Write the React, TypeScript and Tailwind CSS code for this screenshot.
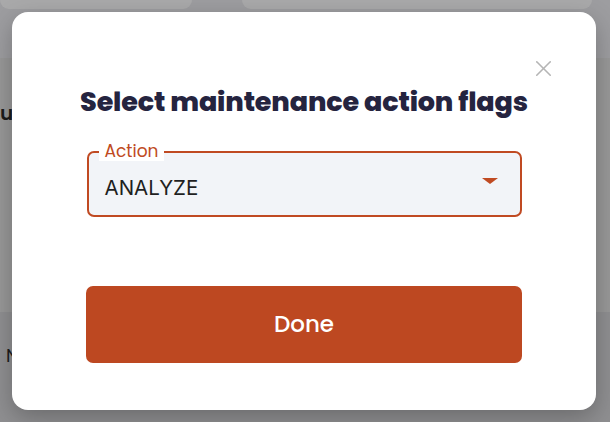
import { X } from 'lucide-react';

const font = { fontFamily: 'Poppins, "Inter", "Noto Sans", sans-serif' };

export default function App() {
  return (
    <div className="relative h-[422px] w-[610px] overflow-hidden bg-[#959596]" style={font}>
      {/* dimmed page behind the dialog */}
      <div className="flex h-full flex-col">
        <div className="flex h-[58px] gap-[50px] bg-[#9d9da0]">
          <div className="h-[9px] w-[192px] rounded-b-[12px] bg-[#a9a9aa]" />
          <div className="h-[9px] w-[350px] rounded-b-[12px] bg-[#a9a9aa]" />
        </div>
        <div className="flex h-[254px] flex-col bg-[#989898] pt-[40px]">
          <span className="text-[20px] font-semibold text-[#1c1c1c]">u</span>
        </div>
        <div className="flex flex-1 flex-col bg-[#8f8f91] pt-[30px]">
          <span className="pl-[6px] text-[18px] text-[#1c1c1c]">N</span>
        </div>
      </div>

      {/* dialog */}
      <div className="absolute left-[12px] top-[12px] flex h-[398px] w-[584px] flex-col items-center rounded-[16px] bg-white shadow-[0_8px_24px_rgba(0,0,0,0.25)]">
        <button className="absolute right-[39px] top-[43px] text-[#b5b5b5]">
          <X size={27} strokeWidth={1.4} />
        </button>

        <h2 className="mt-[72px] h-[36px] text-[27px] font-extrabold leading-[36px] tracking-[-0.15px] text-[#25243f]">
          Select maintenance action flags
        </h2>

        <div className="relative mt-[31px] flex h-[66px] w-[435px] items-center justify-between rounded-[7px] border-2 border-[#c04a22] bg-[#f2f4f8] pl-[16px] pr-[22px]">
          <span className="absolute left-[10px] top-[-12px] bg-white px-[6px] text-[17px] leading-[20px] text-[#c04a22]">
            Action
          </span>
          <span className="pt-[9px] font-['Inter',sans-serif] text-[20.5px] text-[#1f1f22]">ANALYZE</span>
          <svg width="16" height="6" viewBox="0 0 16 6" className="mb-[6px]">
            <path d="M0 0 H16 L8 6 Z" fill="#c04a22" />
          </svg>
        </div>

        <button className="mt-[69px] h-[77px] w-[436px] rounded-[7px] bg-[#bd4821] text-[23px] font-medium text-white">
          Done
        </button>
      </div>
    </div>
  );
}
